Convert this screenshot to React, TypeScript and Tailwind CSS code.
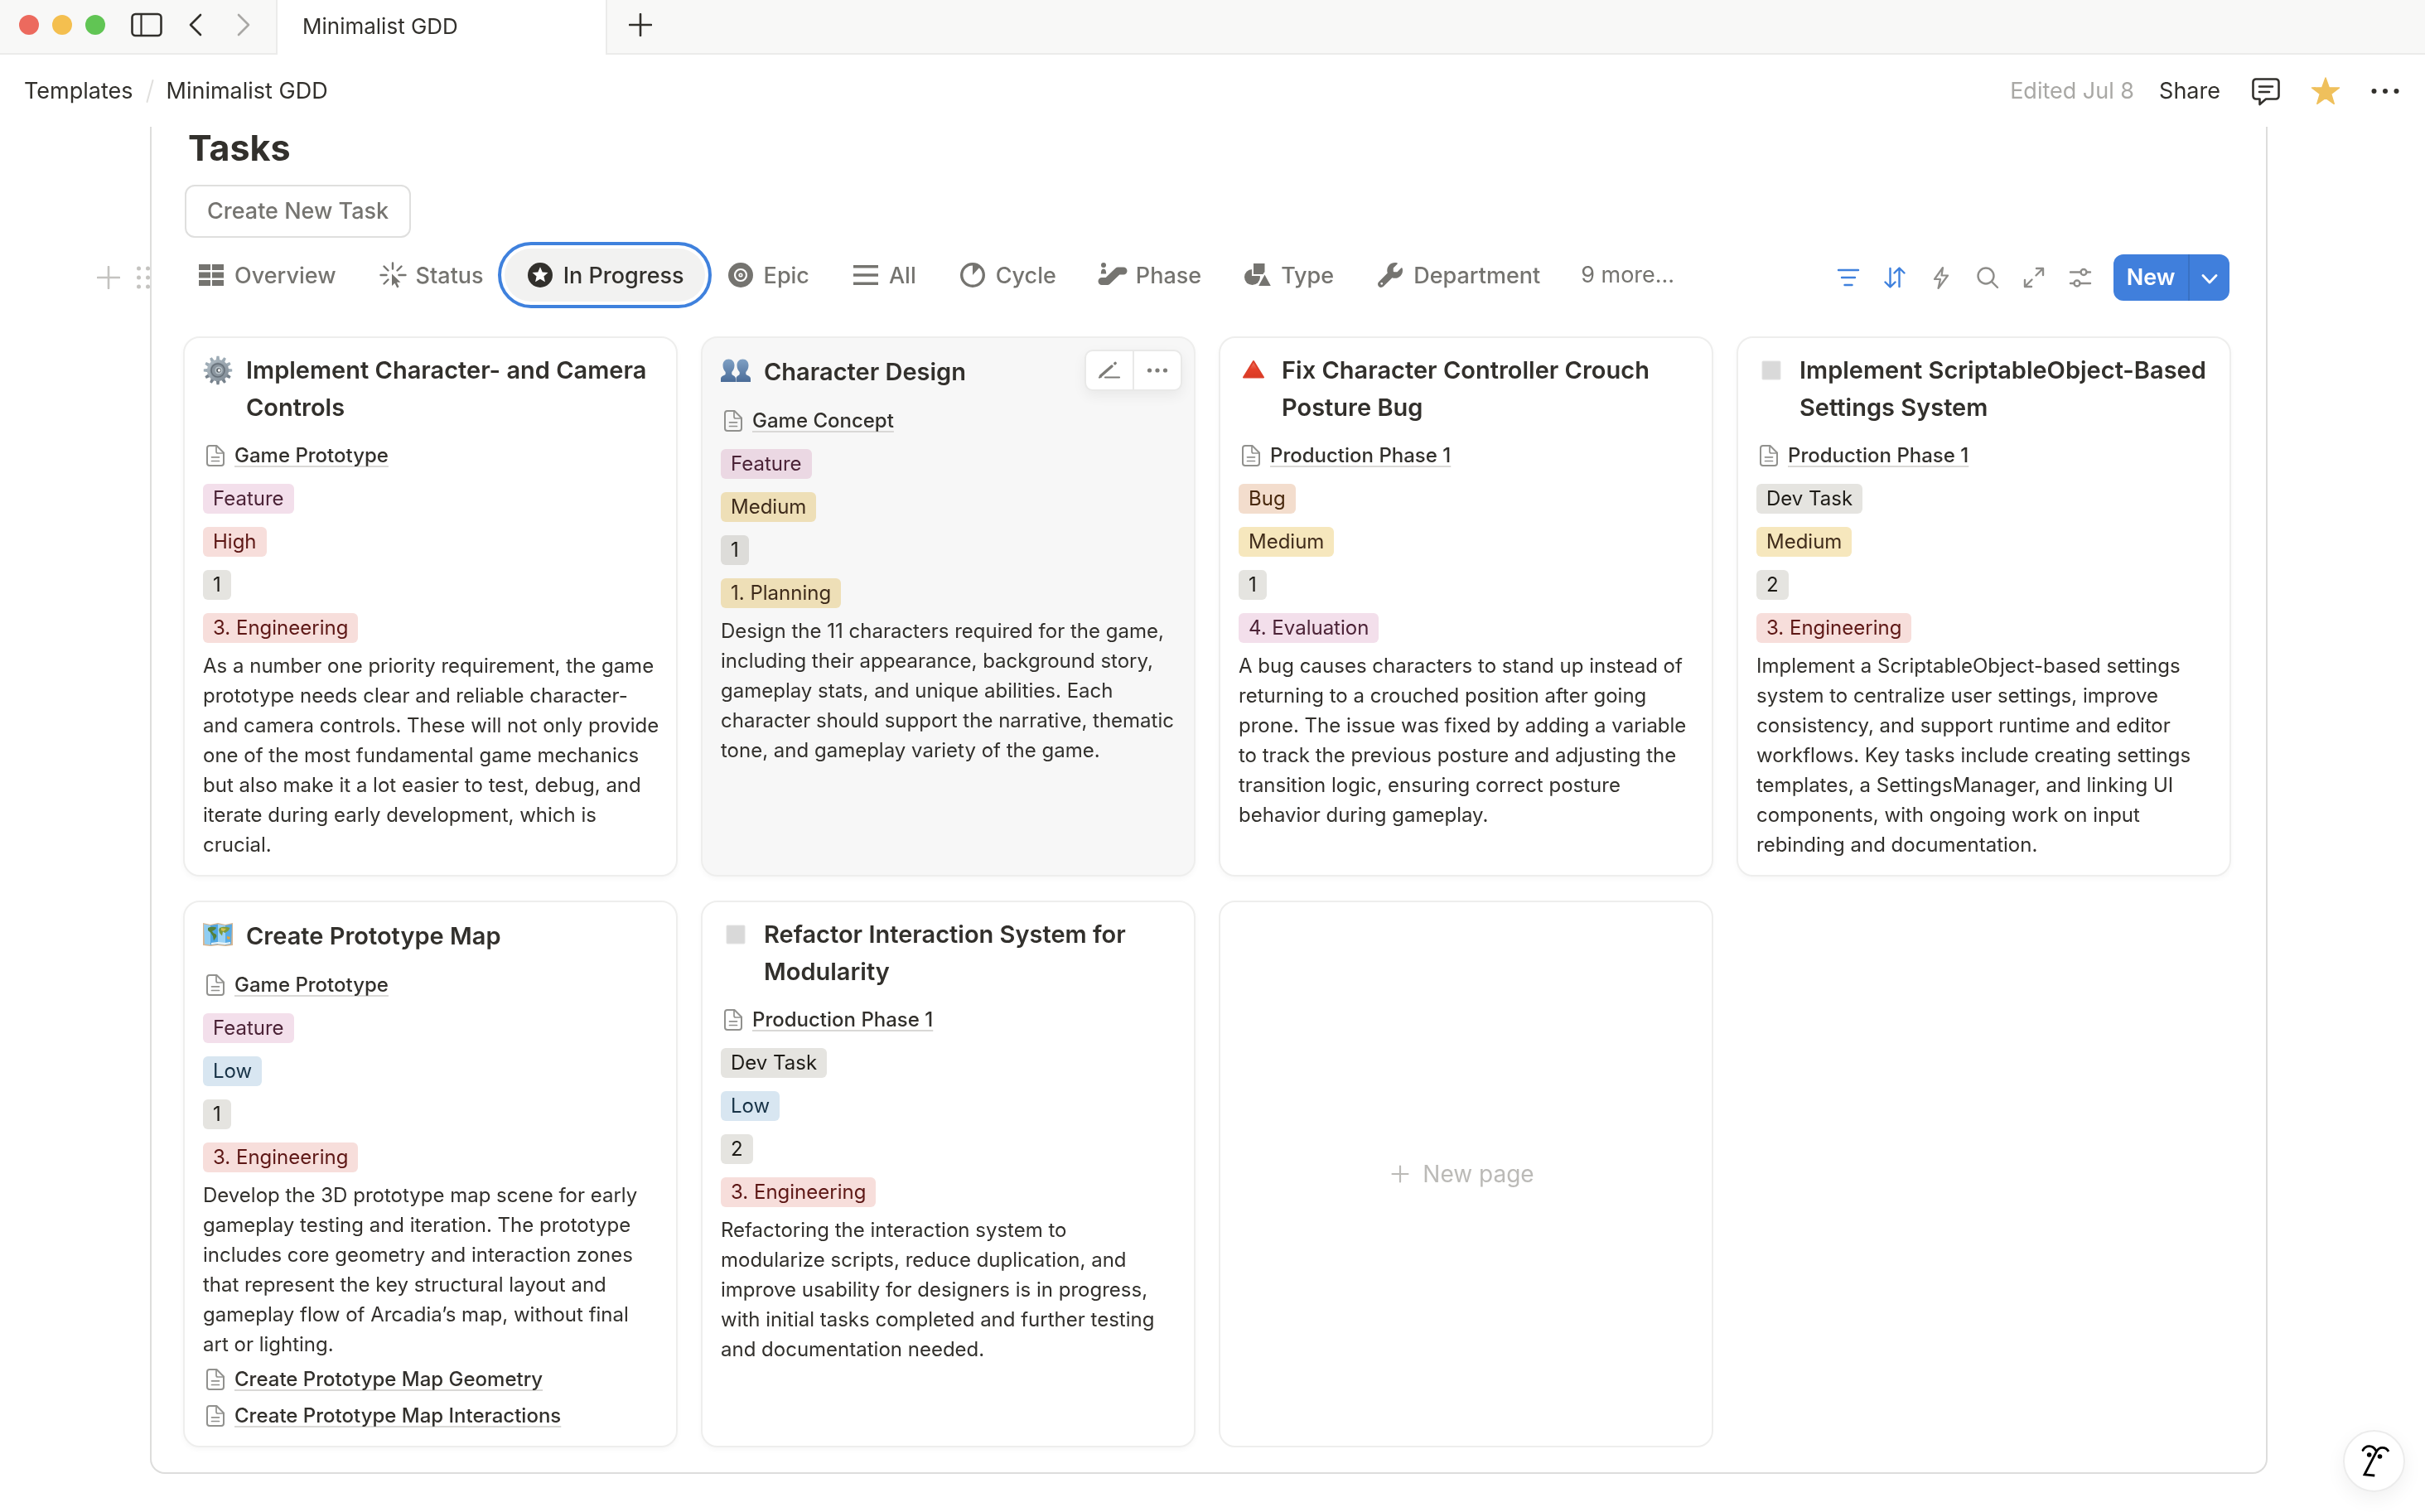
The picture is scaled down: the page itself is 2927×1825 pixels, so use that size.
import type { ReactNode } from "react";
import { FaWrench } from "react-icons/fa6";

type TagColor = "pink" | "red" | "gray" | "yellow" | "orange" | "blue";

const tagColors: Record<TagColor, string> = {
  pink: "bg-[#f3dfeb] text-[#4c2337]",
  red: "bg-[#f7dedb] text-[#5d1715]",
  gray: "bg-[#e5e4e0] text-[#1d1b16]",
  yellow: "bg-[#f6e7bd] text-[#402c1b]",
  orange: "bg-[#f3ddcd] text-[#49290e]",
  blue: "bg-[#d8e6f1] text-[#183347]",
};

type Task = {
  title: string;
  icon: ReactNode;
  page: string;
  tags: [string, TagColor][];
  text: string;
  links?: string[];
  hovered?: boolean;
};

/* ---------- Emoji-style drawings ---------- */

const teeth = [0, 30, 60, 90, 120, 150, 180, 210, 240, 270, 300, 330];

function GearEmoji() {
  return (
    <svg viewBox="0 0 36 36" className="size-9">
      <defs>
        <linearGradient id="gear" x1="0" y1="0" x2="1" y2="1">
          <stop offset="0" stopColor="#b4c0c8" />
          <stop offset="1" stopColor="#7d8892" />
        </linearGradient>
      </defs>
      {teeth.map((a) => (
        <path key={a} d="M15.700 7l.8-6.200h3l.8 6.200z" fill={a > 100 && a < 260 ? "#77828c" : "#9dabb5"} transform={`rotate(${a} 18 18)`} />
      ))}
      <circle cx="18" cy="18" r="13" fill="url(#gear)" />
      <circle cx="18" cy="18" r="9.500" fill="#8a959e" />
      <circle cx="18" cy="18" r="8" fill="none" stroke="#656f78" strokeWidth="1.500" />
      <circle cx="19" cy="18" r="4.500" fill="#bac4ca" />
      <circle cx="19" cy="18" r="2.800" fill="#555d64" />
      <circle cx="19.500" cy="18" r="1.700" fill="#fff" />
    </svg>
  );
}

function PeopleEmoji() {
  return (
    <svg viewBox="0 0 36 36" className="size-9">
      <defs>
        <linearGradient id="bust" x1="0" y1="0" x2="0" y2="1">
          <stop offset="0" stopColor="#7fa0c4" />
          <stop offset="1" stopColor="#4a6c98" />
        </linearGradient>
      </defs>
      <path
        d="M9.500 4.500c4.500 0 7 3.200 7 7.500 0 3.600-1.500 6.300-3.200 8v2.500c0 1.500 4.700 2 4.700 5.500v4H0v-4c0-3.500 5.700-4 5.700-5.500V20c-1.700-1.700-3.200-4.400-3.200-8 0-4.300 2.500-7.500 7-7.500z"
        fill="url(#bust)"
      />
      <path
        d="M26.500 4.500c-4.500 0-7 3.200-7 7.500 0 3.600 1.500 6.300 3.200 8v2.500c0 1.500-4.200 2-4.200 5.500v4H36v-4c0-3.500-5.700-4-5.700-5.500V20c1.700-1.700 3.200-4.400 3.200-8 0-4.300-2.500-7.500-7-7.500z"
        fill="url(#bust)"
      />
    </svg>
  );
}

function TriangleEmoji() {
  return (
    <svg viewBox="0 0 36 36" className="size-9">
      <defs>
        <linearGradient id="tri" x1="0" y1="0" x2="0" y2="1">
          <stop offset="0" stopColor="#f0806c" />
          <stop offset="0.500" stopColor="#e5402a" />
          <stop offset="1" stopColor="#d93a24" />
        </linearGradient>
      </defs>
      <path d="M18 7 30 26.500H6z" fill="url(#tri)" stroke="#dc3f2a" strokeWidth="2" strokeLinejoin="round" />
    </svg>
  );
}

function SquareEmoji() {
  return (
    <svg viewBox="0 0 36 36" className="size-9">
      <rect x="7" y="7" width="22" height="22" rx="1" fill="#d9d9d9" stroke="#e3e3e3" />
    </svg>
  );
}

function MapEmoji() {
  return (
    <svg viewBox="0 0 36 36" className="size-9">
      <path d="M0 4l9 2 9-2 9 2 9-2v27l-9 1-9-1-9 1-9-1z" fill="#d5b592" />
      <path d="M1 5.500l8 1.500v23.500L2 29.500z" fill="#8fcdf2" />
      <path d="M9 7l9-1.500v24L9 30.500z" fill="#4fa6e3" />
      <path d="M18 5.500L27 7v23.500l-9-1z" fill="#9bd3f5" />
      <path d="M27 7l8-1.500-1 24-7 1z" fill="#57abe6" />
      <path d="M6 10c3-1.500 7-1.500 10-.5 0 2-3 3.500-5 4.500l2 2.500c3 1 4 2.500 3 4.500l-3 4.500-1-5.500-3-4.500-3-2.500z" fill="#55803a" />
      <path d="M20 10c4-2 9-1.500 12.500 0l-2 3.500-4 2.500-2.500-1.500-1 5-3-3.500-1-3.500z" fill="#7e9b3b" />
      <path d="M22 10l6 1-3 3-3-1z" fill="#d6c04d" />
      <path d="M29 20l4 1-1 3-3-1z" fill="#e0a640" />
      <path d="M10 28l8-1 9 1 6-1v2l-6 1-9-1-8 1z" fill="#eef6f8" />
    </svg>
  );
}

/* ---------- Interface icons ---------- */

function PageIcon() {
  return (
    <svg viewBox="0 0 22 26" className="h-[26px] w-[22px] shrink-0" fill="none" stroke="#91918e" strokeWidth="2" strokeLinecap="round" strokeLinejoin="round">
      <path d="M4 1h8.500L21 9.500V22a3 3 0 0 1-3 3H4a3 3 0 0 1-3-3V4a3 3 0 0 1 3-3z" />
      <path d="M12 1.500V8a2 2 0 0 0 2 2h6.500M6.500 14.800h9M6.500 19.500h9" strokeWidth="1.700" />
    </svg>
  );
}

function TabIcon({ children }: { children: ReactNode }) {
  return (
    <svg viewBox="0 0 36 36" className="size-9 shrink-0" fill="currentColor">
      {children}
    </svg>
  );
}

const tabs: { label: string; active?: boolean; icon: ReactNode }[] = [
  {
    label: "Overview",
    icon: (
      <TabIcon>
        <path d="M3 5h14v7H3zM19 5h14v7H19zM3 14.500h14v7H3zM19 14.500h14v7H19zM3 24h14v7H3zM19 24h14v7H19z" />
      </TabIcon>
    ),
  },
  {
    label: "Status",
    icon: (
      <TabIcon>
        <path
          d="M18 3.500v7M3.500 18h7M25.500 18h8M7.500 7.500l5 5M28.500 7.500l-5 5M7.500 28.500l5-5"
          fill="none"
          stroke="currentColor"
          strokeWidth="2.400"
          strokeLinecap="round"
        />
        <path d="M17 16.500v14.500l3.500-3.200 2.800 5.600 2.300-1.200-2.700-5.500h4.600z" />
      </TabIcon>
    ),
  },
  {
    label: "In Progress",
    active: true,
    icon: (
      <TabIcon>
        <circle cx="18" cy="18" r="15" />
        <path d="M18 8.200l2.700 6.200 6.800.7-5.100 4.500 1.500 6.700-5.900-3.500-5.900 3.500 1.500-6.700-5.100-4.500 6.800-.7z" fill="#fff" />
      </TabIcon>
    ),
  },
  {
    label: "Epic",
    icon: (
      <TabIcon>
        <circle cx="18" cy="18" r="15" />
        <circle cx="18" cy="18" r="7" fill="none" stroke="#fff" strokeWidth="2.200" />
        <circle cx="18" cy="18" r="2.600" fill="#fff" />
        <circle cx="18" cy="18" r="0.900" />
      </TabIcon>
    ),
  },
  {
    label: "All",
    icon: (
      <TabIcon>
        <path d="M3 6h30v3.600H3zM3 16.200h30v3.600H3zM3 26.400h30V30H3z" />
      </TabIcon>
    ),
  },
  {
    label: "Cycle",
    icon: (
      <TabIcon>
        <circle cx="18" cy="18" r="13.300" fill="none" stroke="currentColor" strokeWidth="3.400" />
        <path d="M18 18V5a13 13 0 0 1 8.500 3.500z" />
      </TabIcon>
    ),
  },
  {
    label: "Phase",
    icon: (
      <TabIcon>
        <path d="M5 25.500h6.500L24.500 13H31" fill="none" stroke="currentColor" strokeWidth="9" strokeLinecap="round" strokeLinejoin="round" />
        <circle cx="7" cy="6" r="3" />
        <path d="M3.800 16.500c0-4 1-6 3.200-6s3.200 2 3.200 6z" />
      </TabIcon>
    ),
  },
  {
    label: "Type",
    icon: (
      <TabIcon>
        <circle cx="11.500" cy="20.500" r="9.500" />
        <path d="M12 3h15.500v15H12z" stroke="#fff" strokeWidth="2" />
        <path d="M26.500 15.500l9 16.500h-18z" stroke="#fff" strokeWidth="2" strokeLinejoin="round" />
      </TabIcon>
    ),
  },
  {
    label: "Department",
    icon: (
      <span className="flex size-9 shrink-0 items-center justify-center">
        <FaWrench size={30} />
      </span>
    ),
  },
];

function ToolIcon({ label, blue, children }: { label: string; blue?: boolean; children: ReactNode }) {
  return (
    <button aria-label={label} className={`flex h-14 w-14 items-center justify-center ${blue ? "text-[#3f81dd]" : "text-[#8e8d8a]"}`}>
      <svg viewBox="0 0 32 32" className="size-8" fill="none" stroke="currentColor" strokeWidth="2.400" strokeLinecap="round" strokeLinejoin="round">
        {children}
      </svg>
    </button>
  );
}

/* ---------- Data ---------- */

const tasks: Task[] = [
  {
    title: "Implement Character- and Camera Controls",
    icon: <GearEmoji />,
    page: "Game Prototype",
    tags: [["Feature", "pink"], ["High", "red"], ["1", "gray"], ["3. Engineering", "red"]],
    text: "As a number one priority requirement, the game prototype needs clear and reliable character- and camera controls. These will not only provide one of the most fundamental game mechanics but also make it a lot easier to test, debug, and iterate during early development, which is crucial.",
  },
  {
    title: "Character Design",
    icon: <PeopleEmoji />,
    page: "Game Concept",
    tags: [["Feature", "pink"], ["Medium", "yellow"], ["1", "gray"], ["1. Planning", "yellow"]],
    text: "Design the 11 characters required for the game, including their appearance, background story, gameplay stats, and unique abilities. Each character should support the narrative, thematic tone, and gameplay variety of the game.",
    hovered: true,
  },
  {
    title: "Fix Character Controller Crouch Posture Bug",
    icon: <TriangleEmoji />,
    page: "Production Phase 1",
    tags: [["Bug", "orange"], ["Medium", "yellow"], ["1", "gray"], ["4. Evaluation", "pink"]],
    text: "A bug causes characters to stand up instead of returning to a crouched position after going prone. The issue was fixed by adding a variable to track the previous posture and adjusting the transition logic, ensuring correct posture behavior during gameplay.",
  },
  {
    title: "Implement ScriptableObject-Based Settings System",
    icon: <SquareEmoji />,
    page: "Production Phase 1",
    tags: [["Dev Task", "gray"], ["Medium", "yellow"], ["2", "gray"], ["3. Engineering", "red"]],
    text: "Implement a ScriptableObject-based settings system to centralize user settings, improve consistency, and support runtime and editor workflows. Key tasks include creating settings templates, a SettingsManager, and linking UI components, with ongoing work on input rebinding and documentation.",
  },
  {
    title: "Create Prototype Map",
    icon: <MapEmoji />,
    page: "Game Prototype",
    tags: [["Feature", "pink"], ["Low", "blue"], ["1", "gray"], ["3. Engineering", "red"]],
    text: "Develop the 3D prototype map scene for early gameplay testing and iteration. The prototype includes core geometry and interaction zones that represent the key structural layout and gameplay flow of Arcadia’s map, without final\nart or lighting.",
    links: ["Create Prototype Map Geometry", "Create Prototype Map Interactions"],
  },
  {
    title: "Refactor Interaction System for Modularity",
    icon: <SquareEmoji />,
    page: "Production Phase 1",
    tags: [["Dev Task", "gray"], ["Low", "blue"], ["2", "gray"], ["3. Engineering", "red"]],
    text: "Refactoring the interaction system to\nmodularize scripts, reduce duplication, and improve usability for designers is in progress, with initial tasks completed and further testing and documentation needed.",
  },
];

/* ---------- Parts ---------- */

function PageLink({ label }: { label: string }) {
  return (
    <a href="#" className="flex h-9 items-center gap-3 pl-1 text-[24px] leading-9 font-medium">
      <PageIcon />
      <span className="underline decoration-[#d9d8d6] decoration-2 underline-offset-4 [text-decoration-skip-ink:none]">{label}</span>
    </a>
  );
}

function TaskCard({ task }: { task: Task }) {
  return (
    <article
      className={`relative rounded-[20px] border-2 border-[#eeeeed] pt-4 pr-[18px] pb-[18px] pl-[22px] shadow-[0_3px_6px_rgba(0,0,0,0.03)] ${
        task.hovered ? "bg-[#f7f7f7]" : "bg-white"
      }`}
    >
      <div className="flex min-h-12 items-center gap-4">
        <div className="flex h-[45px] items-center self-start">{task.icon}</div>
        <h3 className="text-[29px] leading-[45px] font-semibold">{task.title}</h3>
      </div>
      <div className="mt-[18px] flex flex-col items-start gap-4">
        <PageLink label={task.page} />
        {task.tags.map(([label, color], i) => (
          <span
            key={i}
            className={`h-9 rounded-md px-3 text-[24px] leading-9 ${tagColors[color]} ${task.hovered ? "mix-blend-multiply" : ""}`}
          >
            {label}
          </span>
        ))}
      </div>
      <p className="mt-[10px] text-[24px] leading-9 whitespace-pre-line">{task.text}</p>
      {task.links && (
        <div className="mt-1.5 flex flex-col items-start gap-2">
          {task.links.map((l) => (
            <PageLink key={l} label={l} />
          ))}
        </div>
      )}
      {task.hovered && (
        <div className="absolute top-[14px] right-[14px] flex h-[50px] w-[118px] divide-x-2 divide-[#e9e9e8] rounded-[10px] border-2 border-[#e9e9e8] bg-white text-[#7d7c78] shadow-[0_6px_16px_rgba(0,0,0,0.06)]">
          <button aria-label="Edit" className="flex flex-1 items-center justify-center">
            <svg viewBox="0 0 28 24" className="h-6 w-7" fill="none" stroke="currentColor" strokeLinecap="round" strokeLinejoin="round">
              <path d="M3.500 18.800L17 7M20.800 3.800l.4-.4" strokeWidth="3.400" />
              <path d="M9 20.500h17M2 20.500l2-.8" strokeWidth="2.200" />
            </svg>
          </button>
          <button aria-label="More options" className="flex flex-1 items-center justify-center">
            <svg viewBox="0 0 28 24" className="h-6 w-7" fill="currentColor">
              <circle cx="4.500" cy="12" r="2.600" />
              <circle cx="14" cy="12" r="2.600" />
              <circle cx="23.500" cy="12" r="2.600" />
            </svg>
          </button>
        </div>
      )}
    </article>
  );
}

function TitleBar() {
  return (
    <div className="flex h-[66px] bg-[#f8f8f7]">
      <div className="flex w-[335px] items-center border-r-2 border-b-2 border-[#ebebea] pb-1 pl-[23px]">
        <div className="flex gap-4">
          <button aria-label="Close" className="size-6 rounded-full bg-[#ec6a5e]" />
          <button aria-label="Minimize" className="size-6 rounded-full bg-[#f4bf4f]" />
          <button aria-label="Zoom" className="size-6 rounded-full bg-[#61c554]" />
        </div>
        <button aria-label="Toggle sidebar" className="ml-[31px]">
          <svg viewBox="0 0 38 30" className="h-[30px] w-[38px]" fill="none" stroke="#32302c" strokeWidth="2.600">
            <rect x="1.500" y="2" width="35" height="26" rx="4" />
            <path d="M12.500 2v26" strokeWidth="2.200" />
          </svg>
        </button>
        <button aria-label="Back" className="ml-[31px]">
          <svg viewBox="0 0 18 28" className="h-7 w-[18px]" fill="none" stroke="#32302c" strokeWidth="2.600" strokeLinecap="round" strokeLinejoin="round">
            <path d="M15 2L3 14l12 12" />
          </svg>
        </button>
        <button aria-label="Forward" className="ml-10">
          <svg viewBox="0 0 18 28" className="h-7 w-[18px]" fill="none" stroke="#a9a8a5" strokeWidth="2.600" strokeLinecap="round" strokeLinejoin="round">
            <path d="M3 2l12 12L3 26" />
          </svg>
        </button>
      </div>
      <div className="flex w-[396px] items-center bg-white pb-1 pl-[30px] text-[26px]">Minimalist GDD</div>
      <div className="flex flex-1 items-center border-b-2 border-l-2 border-[#ebebea] pb-1 pl-[26px]">
        <button aria-label="New tab">
          <svg viewBox="0 0 28 28" className="size-7" fill="none" stroke="#32302c" strokeWidth="2.600" strokeLinecap="round">
            <path d="M14 1v26M1 14h26" />
          </svg>
        </button>
      </div>
    </div>
  );
}

function PageBar() {
  return (
    <header className="flex h-[87px] items-center justify-between pr-[31px] pl-[29px] text-[27px]">
      <nav className="flex items-center gap-[15px]">
        <a href="#" className="pt-0.5">Templates</a>
        <svg viewBox="0 0 10 28" className="h-7 w-[10px]" stroke="#e0dfdd" strokeWidth="2" strokeLinecap="round">
          <path d="M8.500 1l-7 26" />
        </svg>
        <a href="#" className="pt-0.5">Minimalist GDD</a>
      </nav>
      <div className="flex items-center">
        <span className="pt-0.5 text-[#a9a8a5]">Edited Jul 8</span>
        <button className="ml-[30px] pt-0.5">Share</button>
        <button aria-label="Comments" className="ml-[38px]">
          <svg viewBox="0 0 34 36" className="h-9 w-[34px]" fill="none" stroke="#32302c" strokeWidth="2.600" strokeLinecap="round" strokeLinejoin="round">
            <path d="M5 3.500h24a3.500 3.500 0 0 1 3.500 3.500v17a3.500 3.500 0 0 1-3.500 3.500H17L9.500 34v-6.500H5A3.500 3.500 0 0 1 1.500 24V7A3.500 3.500 0 0 1 5 3.500z" />
            <path d="M9 12.500h16M9 19h12" />
          </svg>
        </button>
        <button aria-label="Favorite" className="ml-[37px]">
          <svg viewBox="0 0 36 36" className="size-9" fill="#efc05c" stroke="#efc05c" strokeWidth="1.500" strokeLinejoin="round">
            <path d="M18 2l4.200 11.700 12.300.3-9.800 7.400 3.500 11.900L18 26.200 7.800 33.300l3.500-11.900L1.500 14l12.300-.3z" />
          </svg>
        </button>
        <button aria-label="More" className="ml-[37px]">
          <svg viewBox="0 0 34 12" className="h-3 w-[34px]" fill="#32302c">
            <circle cx="3.500" cy="6" r="3" />
            <circle cx="17" cy="6" r="3" />
            <circle cx="30.500" cy="6" r="3" />
          </svg>
        </button>
      </div>
    </header>
  );
}

export default function App() {
  return (
    <div className="min-h-screen bg-white font-[Inter,'Liberation_Sans',sans-serif] text-[#32302c]">
      <TitleBar />
      <PageBar />
      <div className="flex">
        <div className="flex w-[181px] shrink-0 items-center justify-end gap-5 self-start pt-[168px] text-[#c4c3c0]">
          <button aria-label="Add block">
            <svg viewBox="0 0 28 28" className="size-7" stroke="currentColor" strokeWidth="2.600" strokeLinecap="round">
              <path d="M14 1v26M1 14h26" />
            </svg>
          </button>
          <button aria-label="Drag block">
            <svg viewBox="0 0 16 28" className="h-7 w-4" fill="currentColor">
              {[3, 14, 25].map((y) => (
                <g key={y}>
                  <circle cx="2.500" cy={y} r="2.500" />
                  <circle cx="13.500" cy={y} r="2.500" />
                </g>
              ))}
            </svg>
          </button>
        </div>
        <main className="mr-[190px] flex-1 rounded-b-[18px] border-x-2 border-b-2 border-[#dddddc] pt-px pr-[42px] pb-[30px] pl-[38px]">
          <h2 className="pl-1.5 text-[43px] leading-[48px] font-bold">Tasks</h2>
          <button className="mt-[21px] ml-0.5 flex h-16 items-center rounded-xl border-2 border-[#dfdfde] px-[25px] text-[27px] font-medium text-[#757470]">
            Create New Task
          </button>
          <div className="mt-[13px] flex items-end justify-between">
            <div role="tablist" className="-ml-[9px] flex text-[#757470]">
              {tabs.map((t) => (
                <button
                  key={t.label}
                  role="tab"
                  aria-selected={!!t.active}
                  className={`flex h-16 items-center gap-[10px] rounded-full px-[25px] text-[27px] font-medium ${
                    t.active ? "bg-[#f2f2f1] text-[#32302c] outline-4 outline-offset-4 outline-[#3f81dd] outline-solid" : ""
                  }`}
                >
                  {t.icon}
                  <span className="pt-0.5">{t.label}</span>
                </button>
              ))}
              <button className="h-16 px-6 text-[27px]">9 more...</button>
            </div>
            <div className="mr-0.5 mb-px flex items-center">
              <ToolIcon label="Filter" blue>
                <path d="M4 7h24M8 16h16M11.500 25h9" />
              </ToolIcon>
              <ToolIcon label="Sort" blue>
                <path d="M10.500 5v22M4.500 21.500l6 6 6-6M21.500 27V5M15.500 10.500l6-6 6 6" />
              </ToolIcon>
              <ToolIcon label="Automations">
                <path d="M18 4L8 18h7l-2.500 11L24 13.500h-7.500z" strokeWidth="2.200" />
              </ToolIcon>
              <ToolIcon label="Search">
                <circle cx="14" cy="14" r="9.500" />
                <path d="M21 21l7 7" />
              </ToolIcon>
              <ToolIcon label="Open full page">
                <path d="M18.500 13.500l8-8M19 5h8v8M13.500 18.500l-8 8M13 27H5v-8" />
              </ToolIcon>
              <ToolIcon label="View settings">
                <path d="M4 9.500h12.500M23.500 9.500H28M4 23h4.500M15.500 23H28" />
                <circle cx="20" cy="9.500" r="3.500" />
                <circle cx="12" cy="23" r="3.500" />
              </ToolIcon>
              <div className="ml-3 flex h-14 divide-x-2 divide-[#3972c4] overflow-hidden rounded-xl bg-[#407fdc] text-white">
                <button className="w-[92px] text-[27px] font-semibold">New</button>
                <button aria-label="New options" className="flex w-12 items-center justify-center pt-1">
                  <svg viewBox="0 0 20 12" className="h-3 w-5" fill="none" stroke="currentColor" strokeWidth="2.800" strokeLinecap="round" strokeLinejoin="round">
                    <path d="M2 1.500l8 8.500 8-8.500" />
                  </svg>
                </button>
              </div>
            </div>
          </div>
          <div className="mt-[42px] grid grid-cols-4 gap-x-7 gap-y-[29px]">
            {tasks.map((t) => (
              <TaskCard key={t.title} task={t} />
            ))}
            <button className="flex items-center justify-center gap-4 rounded-[20px] border-2 border-[#eeeeed] pr-2 text-[28px] text-[#bbbab7]">
              <svg viewBox="0 0 22 22" className="size-[22px]" stroke="currentColor" strokeWidth="2.200" strokeLinecap="round">
                <path d="M11 1.500v19M1.500 11h19" />
              </svg>
              New page
            </button>
          </div>
        </main>
      </div>
      <button
        aria-label="Notion AI"
        className="fixed right-6 bottom-6 size-[75px] rounded-full border-2 border-[#ececec] bg-white shadow-[0_8px_24px_rgba(0,0,0,0.06)]"
      >
        <svg viewBox="2 2 71 71" className="size-[71px]" fill="none" stroke="#000" strokeWidth="2.800" strokeLinecap="round">
          <path d="M24 24.500c2-3.500 5-5 8-4.800s6 2 7.500 4.800" />
          <path d="M55 26c-1.500-3-4.500-4.600-7.500-4.600s-5.500 1.600-7.200 5L26 53.800l12.300 1.200" strokeLinecap="butt" />
          <circle cx="31.700" cy="30" r="2.800" fill="#000" stroke="none" />
          <circle cx="44.500" cy="32" r="2.800" fill="#000" stroke="none" />
        </svg>
      </button>
    </div>
  );
}
